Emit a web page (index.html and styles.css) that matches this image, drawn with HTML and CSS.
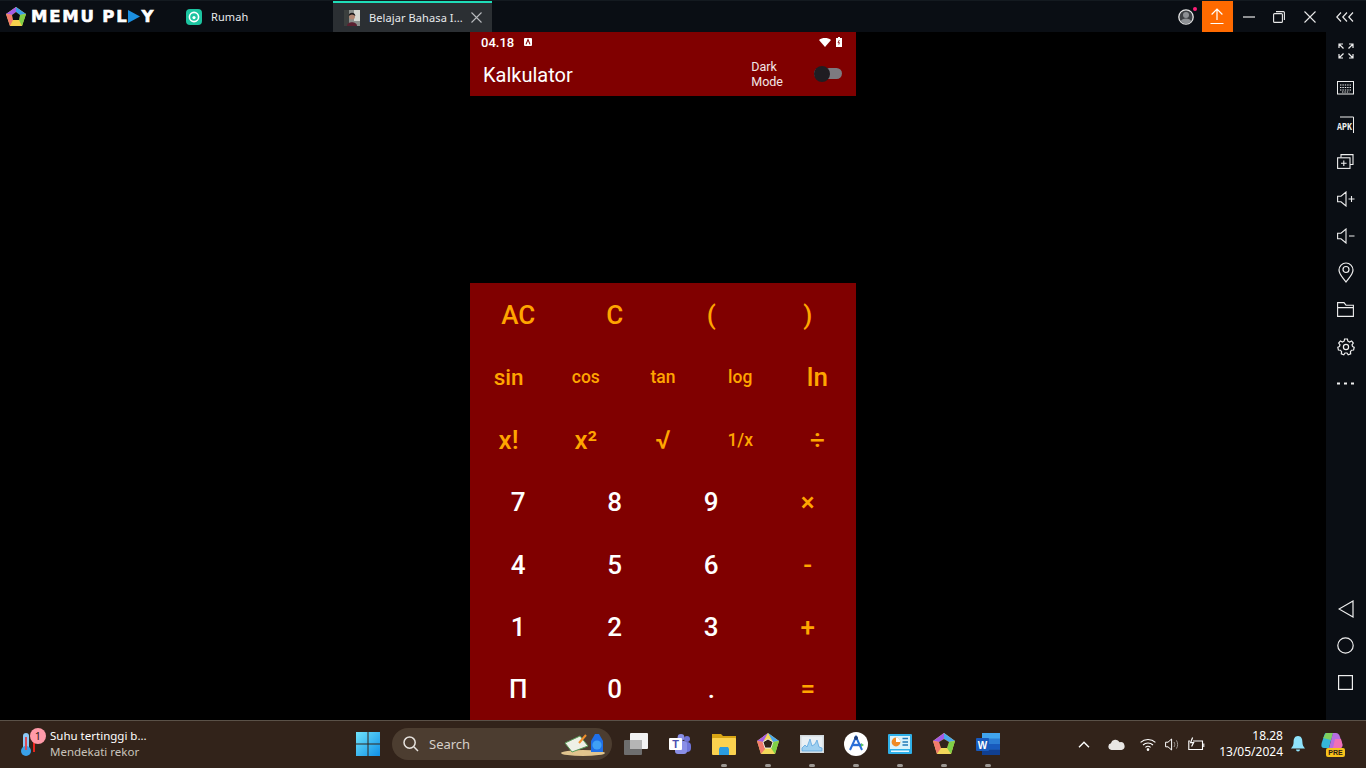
FILE: index.html
```html
<!DOCTYPE html>
<html lang="id">
<head>
  <meta charset="UTF-8">
  <meta name="viewport" content="width=device-width, initial-scale=1">
  <title>MEmu Play - Kalkulator</title>
  <link rel="stylesheet" href="styles.css">
</head>
<body>
  <header class="titlebar">
    <div class="logo">
      <svg class="logo-mark" width="22" height="22" viewBox="0 0 22 22">
        <path d="M11 1 L21 8 L17 20 L5 20 L1 8 Z" fill="#f6d04d"/>
        <path d="M11 1 L21 8 L15 9 L11 6 Z" fill="#3a9ee8"/>
        <path d="M11 1 L11 6 L7 9 L1 8 Z" fill="#a45be6"/>
        <path d="M1 8 L7 9 L8 14 L5 20 Z" fill="#f27a6c"/>
        <path d="M21 8 L17 20 L14 14 L15 9 Z" fill="#7fd046"/>
        <path d="M11 6 L15 9 L14 14 L8 14 L7 9 Z" fill="#0a0e14"/>
      </svg>
      <span class="logo-text">MEMU PL<svg class="logo-play" width="12" height="13" viewBox="0 0 12 13"><path d="M0 0 L12 6.5 L0 13 Z" fill="#1b8fe0"/></svg>Y</span>
    </div>
    <div class="tab">
      <svg width="16" height="16" viewBox="0 0 16 16">
        <rect width="16" height="16" rx="4" fill="#1cc4a0"/>
        <circle cx="8" cy="8" r="4.6" fill="none" stroke="#fff" stroke-width="1.6"/>
        <circle cx="8" cy="8.6" r="1.6" fill="#fff"/>
      </svg>
      <span>Rumah</span>
    </div>
    <div class="tab tab-active">
      <svg width="16" height="16" viewBox="0 0 16 16">
        <rect width="16" height="16" fill="#8a8f8c"/>
        <rect x="10" width="6" height="11" fill="#d6d8d2"/>
        <rect width="5" height="16" fill="#3b3f3e"/>
        <path d="M3 16 C3 11 13 11 13 16 Z" fill="#5a2030"/>
        <circle cx="8" cy="6.5" r="3" fill="#b08672"/>
        <path d="M4.6 6 C5 1.8 11 1.8 11.4 6 C9 4 7 4 4.6 6 Z" fill="#1c1a1c"/>
      </svg>
      <span class="tab-title">Belajar Bahasa I...</span>
      <svg class="tab-close" width="11" height="11" viewBox="0 0 11 11"><path d="M.5.5 L10.5 10.5 M10.5.5 L.5 10.5" stroke="#b9bcbf" stroke-width="1.1"/></svg>
    </div>
    <div class="window-controls">
      <span class="control control-profile">
        <svg width="18" height="18" viewBox="0 0 18 18">
          <circle cx="9" cy="9" r="7.2" fill="#3d4044" stroke="#e4e4e4" stroke-width="1.3"/>
          <circle cx="9" cy="7" r="3" fill="#8d9094"/>
          <path d="M3.6 13.6 C5 9.6 13 9.6 14.4 13.6 C12 16 6 16 3.6 13.6 Z" fill="#8d9094"/>
        </svg>
        <i class="profile-dot"></i>
      </span>
      <span class="control control-upload">
        <svg width="14" height="17" viewBox="0 0 14 17" fill="none" stroke="#fff" stroke-width="1.2"><path d="M7 12 V1.2 M1.6 6.5 L7 1 L12.4 6.5 M.5 15.5 H13.5"/></svg>
      </span>
      <span class="control control-win">
        <svg width="12" height="2" viewBox="0 0 12 2"><path d="M0 1 H12" stroke="#e8e8e8" stroke-width="1.2"/></svg>
      </span>
      <span class="control control-win">
        <svg width="12" height="12" viewBox="0 0 12 12" fill="none" stroke="#e8e8e8" stroke-width="1.1"><rect x=".6" y="2.6" width="8.8" height="8.8" rx="1"/><path d="M3 .6 H10.4 A1 1 0 0 1 11.4 1.6 V9"/></svg>
      </span>
      <span class="control control-win">
        <svg width="12" height="12" viewBox="0 0 12 12"><path d="M.5.5 L11.5 11.5 M11.5.5 L.5 11.5" stroke="#e8e8e8" stroke-width="1.1"/></svg>
      </span>
      <span class="control control-more">
        <svg width="18" height="10" viewBox="0 0 18 10" fill="none" stroke="#e8e8e8" stroke-width="1.2"><path d="M5 .5 L.8 5 L5 9.5 M11 .5 L6.8 5 L11 9.5 M17 .5 L12.8 5 L17 9.5"/></svg>
      </span>
    </div>
  </header>

  <div class="workspace">
    <main class="stage">
      <section class="phone">
        <div class="phone-header">
          <div class="statusbar">
            <span class="clock">04.18</span>
            <svg class="status-a" width="8" height="8" viewBox="0 0 8 8"><rect width="8" height="8" rx="1" fill="#fff"/><path d="M2 6.4 L4 1.6 L6 6.4" fill="none" stroke="#800000" stroke-width="1.1"/></svg>
            <span class="status-right">
              <svg width="12" height="9" viewBox="0 0 12 9"><path d="M0 2 C3.4 -.6 8.6 -.6 12 2 L6 9 Z" fill="#fff"/></svg>
              <svg width="6" height="10" viewBox="0 0 6 10"><path d="M2 0 H4 V1 H6 V10 H0 V1 H2 Z" fill="#fff"/><path d="M3.4 3 L2 5.6 H3.4 L2.8 7.6" fill="none" stroke="#800000" stroke-width=".8"/></svg>
            </span>
          </div>
          <div class="appbar">
            <h1>Kalkulator</h1>
            <span class="dark-label">Dark<br>Mode</span>
            <span class="switch"><i class="switch-thumb"></i></span>
          </div>
        </div>

        <div class="keypad">
          <div class="key-row">
            <button class="key size-lg">AC</button>
            <button class="key size-lg">C</button>
            <button class="key size-lg">(</button>
            <button class="key size-lg">)</button>
          </div>
          <div class="key-row">
            <button class="key size-sin">sin</button>
            <button class="key size-sm">cos</button>
            <button class="key size-sm">tan</button>
            <button class="key size-sm">log</button>
            <button class="key size-lg">ln</button>
          </div>
          <div class="key-row">
            <button class="key size-lg">x!</button>
            <button class="key size-lg">x²</button>
            <button class="key size-lg">√</button>
            <button class="key size-sm">1/x</button>
            <button class="key size-lg">÷</button>
          </div>
          <div class="key-row">
            <button class="key digit">7</button>
            <button class="key digit">8</button>
            <button class="key digit">9</button>
            <button class="key size-lg">×</button>
          </div>
          <div class="key-row">
            <button class="key digit">4</button>
            <button class="key digit">5</button>
            <button class="key digit">6</button>
            <button class="key size-lg">-</button>
          </div>
          <div class="key-row">
            <button class="key digit">1</button>
            <button class="key digit">2</button>
            <button class="key digit">3</button>
            <button class="key size-lg">+</button>
          </div>
          <div class="key-row">
            <button class="key digit">Π</button>
            <button class="key digit">0</button>
            <button class="key digit">.</button>
            <button class="key size-lg">=</button>
          </div>
        </div>
      </section>
    </main>

    <aside class="sidebar">
      <div class="side-group">
        <span class="side-item"><svg width="16" height="16" viewBox="0 0 16 16" fill="none" stroke="#eee" stroke-width="1.2"><path d="M1 5 V1 H5 M1 1 L5.5 5.5 M11 1 H15 V5 M15 1 L10.5 5.5 M1 11 V15 H5 M1 15 L5.5 10.5 M15 11 V15 H11 M15 15 L10.5 10.5"/></svg></span>
        <span class="side-item"><svg width="18" height="14" viewBox="0 0 18 14" fill="none" stroke="#eee"><rect x=".5" y=".5" width="16" height="12.5"/><path d="M3 4 H14.5 M3 6.5 H14.5 M3 9 H14.5 M5 11 H12.5" stroke-dasharray="1.4 1"/></svg></span>
        <span class="side-item"><svg width="22" height="18" viewBox="0 0 22 18"><path d="M5 1 H18.5 V17" fill="none" stroke="#eee"/><text class="apk-text" x="2" y="14" textLength="15" lengthAdjust="spacingAndGlyphs">APK</text></svg></span>
        <span class="side-item"><svg width="17" height="15" viewBox="0 0 17 15" fill="none" stroke="#eee" stroke-width="1.1"><path d="M4 3.5 V.6 H16 V10.5 H13"/><rect x=".6" y="3.8" width="12.4" height="10.6"/><path d="M6.8 6.4 V12 M4 9.2 H9.6"/></svg></span>
        <span class="side-item"><svg width="18" height="16" viewBox="0 0 18 16" fill="none" stroke="#eee" stroke-width="1.1"><path d="M.6 5.2 H4 L9 1 V15 L4 10.8 H.6 Z M11.5 8 H17.5 M14.5 5 V11"/></svg></span>
        <span class="side-item"><svg width="18" height="16" viewBox="0 0 18 16" fill="none" stroke="#eee" stroke-width="1.1"><path d="M.6 5.2 H4 L9 1 V15 L4 10.8 H.6 Z M12 8 H17.5"/></svg></span>
        <span class="side-item"><svg width="16" height="21" viewBox="0 0 16 21" fill="none" stroke="#eee" stroke-width="1.2"><path d="M8 20 C5 15.5 1 12.5 1 8 A7 7 0 0 1 15 8 C15 12.5 11 15.5 8 20 Z"/><circle cx="8" cy="7.5" r="3"/></svg></span>
        <span class="side-item"><svg width="17" height="15" viewBox="0 0 17 15" fill="none" stroke="#eee" stroke-width="1.1"><path d="M.6 14.4 V.6 H7 L9 3.2 H16.4 V14.4 Z M.6 5.6 H16.4"/></svg></span>
        <span class="side-item"><svg width="18" height="18" viewBox="0 0 18 18" fill="none" stroke="#eee" stroke-width="1.2"><circle cx="9" cy="9" r="2.6"/><path d="M7.6 1 H10.4 L10.9 3.2 L12.6 4 L14.6 2.9 L16.3 5 L15 6.8 L15.5 8.4 L17.2 9.4 L16.6 12 L14.6 12.2 L13.4 13.7 L13.7 15.9 L11.2 16.8 L10 15 H8 L6.8 16.8 L4.3 15.9 L4.6 13.7 L3.4 12.2 L1.4 12 L.8 9.4 L2.5 8.4 L3 6.8 L1.7 5 L3.4 2.9 L5.4 4 L7.1 3.2 Z"/></svg></span>
        <span class="side-item"><svg width="17" height="3" viewBox="0 0 17 3"><path d="M0 1.5 H3 M7 1.5 H10 M14 1.5 H17" stroke="#eee" stroke-width="2"/></svg></span>
      </div>
      <div class="side-group side-nav">
        <span class="side-item"><svg width="16" height="18" viewBox="0 0 16 18" fill="none" stroke="#eee" stroke-width="1.2"><path d="M15 1 V17 L1 9 Z"/></svg></span>
        <span class="side-item"><svg width="17" height="17" viewBox="0 0 17 17" fill="none" stroke="#eee" stroke-width="1.2"><circle cx="8.5" cy="8.5" r="7.7"/></svg></span>
        <span class="side-item"><svg width="15" height="15" viewBox="0 0 15 15" fill="none" stroke="#eee" stroke-width="1.2"><rect x=".6" y=".6" width="13.8" height="13.8"/></svg></span>
      </div>
    </aside>
  </div>

  <footer class="taskbar">
    <div class="widget">
      <span class="widget-icon">
        <svg width="18" height="28" viewBox="0 0 18 28">
          <rect x="3" y="3" width="6" height="17" rx="3" fill="#8cc8f5"/>
          <circle cx="6" cy="21" r="5" fill="#39a0e8"/>
          <rect x="5" y="7" width="2" height="13" fill="#d94a5a"/>
          <rect x="13" y="12" width="2" height="10" fill="#e8241c"/>
        </svg>
        <i class="widget-badge">1</i>
      </span>
      <div class="widget-text">
        <span class="widget-title">Suhu tertinggi b...</span>
        <span class="widget-sub">Mendekati rekor</span>
      </div>
    </div>

    <div class="task-center">
      <span class="task-icon">
        <svg width="24" height="24" viewBox="0 0 24 24">
          <defs><linearGradient id="win" x1="0" y1="0" x2="1" y2="1"><stop offset="0" stop-color="#6fe3fb"/><stop offset="1" stop-color="#0f8fe6"/></linearGradient></defs>
          <path d="M0 0 H11.5 V11.5 H0 Z M12.5 0 H24 V11.5 H12.5 Z M0 12.5 H11.5 V24 H0 Z M12.5 12.5 H24 V24 H12.5 Z" fill="url(#win)"/>
        </svg>
      </span>
      <div class="search">
        <svg width="16" height="16" viewBox="0 0 16 16" fill="none" stroke="#e6e2dd" stroke-width="1.5"><circle cx="6.6" cy="6.6" r="5.6"/><path d="M10.8 10.8 L15 15"/></svg>
        <span class="search-text">Search</span>
        <svg class="search-art" width="46" height="24" viewBox="0 0 46 24">
          <ellipse cx="23" cy="21" rx="22" ry="3" fill="#e0c48e"/>
          <path d="M5 11 L20 4 L28 14 L12 20 Z" fill="#eef0e6" stroke="#5a9c5a"/>
          <path d="M19 11 L26 3" stroke="#f0902c" stroke-width="2"/>
          <path d="M31 20 L31 9 L35 2 H39 L43 9 V20 Z" fill="#1f6fe8"/>
          <circle cx="37" cy="13" r="4.6" fill="#3fa0f4"/>
        </svg>
      </div>
      <span class="task-icon">
        <svg width="24" height="22" viewBox="0 0 24 22"><rect x="0" y="7" width="18" height="15" rx="1" fill="#6e6e6e"/><rect x="6" y="0" width="18" height="16" rx="1" fill="#f2f2f2"/><rect x="6" y="7" width="12" height="9" fill="#b5b5b5"/></svg>
      </span>
      <span class="task-icon">
        <svg width="24" height="20" viewBox="0 0 24 20"><circle cx="19" cy="5" r="3" fill="#6f74d8"/><rect x="13" y="8" width="10" height="10" rx="4" fill="#6f74d8"/><circle cx="13" cy="3.4" r="3.4" fill="#8a8fe6"/><rect x="7" y="7" width="12" height="13" rx="3" fill="#8a8fe6"/><rect x="1" y="4" width="13" height="12" rx="1" fill="#fff"/><text class="teams-t" x="7.5" y="13.5">T</text></svg>
      </span>
      <span class="task-icon running">
        <svg width="24" height="22" viewBox="0 0 24 22"><path d="M0 1 H9 L11 3 H24 V6 H0 Z" fill="#d9a514"/><rect y="5" width="24" height="17" rx="1" fill="#fbd24f"/><path d="M8 14 H16 L17 16 V22 H7 V16 Z" fill="#2a9ce0"/></svg>
      </span>
      <span class="task-icon running">
        <svg width="24" height="24" viewBox="0 0 24 24"><path d="M12 1 L23 9 L19 22 L5 22 L1 9 Z" fill="#f3d85a"/><path d="M12 1 L23 9 L17 10 Z" fill="#4aa8ec"/><path d="M12 1 L7 10 L1 9 Z" fill="#a45be6"/><path d="M1 9 L7 10 L9 17 L5 22 Z" fill="#f27a6c"/><path d="M23 9 L19 22 L15 16 L17 10 Z" fill="#7fd046"/><path d="M12 7 L17 10 L15 16 L9 16 L7 10 Z" fill="#32231a" stroke="#fff" stroke-width=".8"/></svg>
      </span>
      <span class="task-icon running">
        <svg width="24" height="18" viewBox="0 0 24 18"><rect width="24" height="18" fill="#d3dade"/><rect x="1.5" y="1.5" width="21" height="15" fill="#e9f0f5"/><path d="M2 13 L5 10 L7 12 L10 4 L12 11 L15 9 L17 5 L19 12 L22 13 V16 H2 Z" fill="#9ecff0" stroke="#4f9fdc" stroke-width=".7"/></svg>
      </span>
      <span class="task-icon running">
        <svg width="24" height="24" viewBox="0 0 24 24"><circle cx="12" cy="12" r="12" fill="#fff"/><path d="M6 18 L12 5 L18 18" fill="none" stroke="#2a6fd8" stroke-width="2"/><path d="M8 13 H17" stroke="#2a6fd8" stroke-width="2.4"/><circle cx="12" cy="6" r="2" fill="#1f3f7a"/><path d="M17 11 L20 13 L17 15 Z" fill="#57c06a"/></svg>
      </span>
      <span class="task-icon running">
        <svg width="24" height="20" viewBox="0 0 24 20"><rect width="24" height="20" rx="1" fill="#2fb0e8"/><rect x="2" y="2" width="20" height="13" fill="#d9f2fb"/><circle cx="8" cy="8" r="4.4" fill="#f08a24"/><path d="M8 8 V3.6 A4.4 4.4 0 0 1 12.4 8 Z" fill="#fff"/><path d="M14.5 4.5 H20 M14.5 8 H20 M14.5 11 H20" stroke="#2079b8" stroke-width="1.4"/><rect x="3" y="16.5" width="18" height="1.5" fill="#e6f7ff"/></svg>
      </span>
      <span class="task-icon running">
        <svg width="24" height="24" viewBox="0 0 24 24"><path d="M12 1 L23 9 L19 22 L5 22 L1 9 Z" fill="#f3d85a"/><path d="M12 1 L23 9 L17 10 L12 7 Z" fill="#4aa8ec"/><path d="M12 1 L12 7 L7 10 L1 9 Z" fill="#a45be6"/><path d="M1 9 L7 10 L9 16 L5 22 Z" fill="#f27a6c"/><path d="M23 9 L19 22 L15 16 L17 10 Z" fill="#7fd046"/><path d="M12 7 L17 10 L15 16 L9 16 L7 10 Z" fill="#32231a"/></svg>
      </span>
      <span class="task-icon running">
        <svg width="24" height="22" viewBox="0 0 24 22"><path d="M6 0 H24 V22 H6 Z" fill="#2b7cd3"/><rect x="6" width="18" height="5.5" fill="#41a5ee"/><rect x="6" y="11" width="18" height="5.5" fill="#185abd"/><rect x="6" y="16.5" width="18" height="5.5" fill="#103f91"/><rect y="5" width="13" height="13" rx="1" fill="#185abd"/><text class="word-w" x="6.5" y="15.5">W</text></svg>
      </span>
    </div>

    <div class="tray">
      <svg class="tray-chevron" width="12" height="7" viewBox="0 0 12 7" fill="none" stroke="#fff" stroke-width="1.4"><path d="M1 6.2 L6 1.2 L11 6.2"/></svg>
      <svg class="tray-cloud" width="17" height="11" viewBox="0 0 17 11"><path d="M3.5 11 A3.4 3.4 0 0 1 3 4.3 A4.6 4.6 0 0 1 11.6 3.2 A3.9 3.9 0 0 1 13.5 11 Z" fill="#e8e6e4"/></svg>
      <svg class="tray-wifi" width="16" height="13" viewBox="0 0 16 13" fill="none" stroke="#fff" stroke-width="1.1"><path d="M.6 4.4 C4.6 .6 11.4 .6 15.4 4.4 M3 7 C5.8 4.4 10.2 4.4 13 7 M5.4 9.4 C6.8 8.2 9.2 8.2 10.6 9.4"/><circle cx="8" cy="11.6" r=".8" fill="#fff"/></svg>
      <svg class="tray-sound" width="16" height="13" viewBox="0 0 16 13" fill="none" stroke="#fff"><path d="M.6 4.2 H3 L6.6 1 V12 L3 8.8 H.6 Z"/><path d="M9 4 C10 5.4 10 7.6 9 9 M11.4 2.4 C13 4.6 13 8.4 11.4 10.6" stroke="#9b9590"/></svg>
      <svg class="tray-battery" width="17" height="14" viewBox="0 0 17 14" fill="none" stroke="#fff" stroke-width="1.1"><path d="M5 4 H14.5 V12.5 H.8 V4 H2"/><path d="M15.8 6.5 V10"/><path d="M4.6 .5 L2.6 5.6 H5.6 L3.6 9.5" stroke-width="1.2"/></svg>
      <div class="tray-clock">
        <span>18.28</span>
        <span>13/05/2024</span>
      </div>
      <svg class="tray-bell" width="14" height="16" viewBox="0 0 14 16"><path d="M7 0 C10.4 0 11.4 3 11.4 6 C11.4 9 12.4 10.6 14 12.4 H0 C1.6 10.6 2.6 9 2.6 6 C2.6 3 3.6 0 7 0 Z M5 13.4 H9 A2 2 0 0 1 5 13.4 Z" fill="#8fe3fb"/></svg>
      <span class="copilot">
        <svg width="22" height="19" viewBox="0 0 22 19"><path d="M5 1 H12 L8 16 H3 C0 16 0 13 1 10 L3 4 C3.6 2 4 1 5 1 Z" fill="#35b7d8"/><path d="M5 1 H12 L10 8 L2.2 6 Z" fill="#7fcf5e"/><path d="M12 1 H15 C17 1 18 2 19 5 L21 11 C22 14 21 16 19 16 H8 Z" fill="#b66de0"/><path d="M14 7 H20 L21 11 C22 14 21 16 19 16 H12 Z" fill="#f070b8"/></svg>
        <i class="pre-badge">PRE</i>
      </span>
    </div>
  </footer>
</body>
</html>
```

FILE: styles.css
```css
* {
  margin: 0;
  padding: 0;
  box-sizing: border-box;
}

body {
  width: 1366px;
  height: 768px;
  overflow: hidden;
  display: flex;
  flex-direction: column;
  background: #000;
  font-family: "Noto Sans", "Open Sans", sans-serif;
  color: #fff;
}

svg {
  display: block;
  flex-shrink: 0;
}

/* title bar */
.titlebar {
  height: 32px;
  flex-shrink: 0;
  display: flex;
  align-items: center;
  background: #0a0e14;
  border-top: 1px solid #141a20;
}

.logo {
  width: 186px;
  padding-left: 5px;
  display: flex;
  align-items: center;
  gap: 4px;
}

.logo-text {
  display: flex;
  align-items: center;
  font-family: "DejaVu Sans", "Liberation Sans", sans-serif;
  font-weight: 700;
  font-size: 16.5px;
  letter-spacing: 1.8px;
  word-spacing: -1px;
  white-space: pre;
  -webkit-text-stroke: 0.6px #fff;
}

.logo-play {
  margin: 0 1px 0 0;
}

.tab {
  display: flex;
  align-items: center;
  gap: 9px;
  width: 147px;
  height: 31px;
  font-size: 11px;
  letter-spacing: 0.1px;
  color: #e8eaec;
}

.tab-active {
  width: 159px;
  padding-left: 11px;
  gap: 9px;
  background: #2b2f33;
  border-top: 2px solid #1fdcb8;
}

.tab-title {
  width: 95px;
  white-space: nowrap;
}

.tab-close {
  margin-left: -2px;
}

.window-controls {
  margin-left: auto;
  display: flex;
  align-items: center;
  height: 31px;
}

.control {
  position: relative;
  display: flex;
  align-items: center;
  justify-content: center;
  height: 31px;
}

.control-profile {
  width: 30px;
  margin-right: 1px;
}

.profile-dot {
  position: absolute;
  top: 6px;
  right: 4px;
  width: 4px;
  height: 4px;
  border-radius: 50%;
  background: #ff1e78;
}

.control-upload {
  width: 31px;
  margin-right: 1px;
  background: #ff6a00;
}

.control-win {
  width: 30.5px;
}

.control-more {
  width: 41px;
  padding-right: 1px;
}

/* emulator area */
.workspace {
  flex: 1;
  min-height: 0;
  display: flex;
}

.stage {
  flex: 1;
  padding-left: 470px;
  background: #000;
}

.phone {
  width: 386px;
  height: 100%;
  display: flex;
  flex-direction: column;
  justify-content: space-between;
}

.phone-header {
  height: 64px;
  padding: 0 14px 0 11px;
  background: #800000;
}

.statusbar {
  height: 20px;
  display: flex;
  align-items: center;
  gap: 10px;
  font-family: "Roboto", sans-serif;
  font-size: 13px;
  font-weight: 500;
}

.status-right {
  margin-left: auto;
  display: flex;
  align-items: center;
  gap: 5px;
}

.appbar {
  display: flex;
  align-items: center;
  height: 44px;
  padding: 1px 0 0 2px;
  font-family: "Roboto", sans-serif;
}

.appbar h1 {
  font-size: 20px;
  font-weight: 400;
  width: 269px;
}

.dark-label {
  width: 63px;
  margin-bottom: 2px;
  font-size: 12.5px;
  line-height: 15px;
  color: #f2e6e6;
}

.switch {
  position: relative;
  width: 28px;
  height: 11px;
  margin-bottom: 2px;
  border-radius: 6px;
  background: #7d7a80;
}

.switch-thumb {
  position: absolute;
  left: 0;
  top: -2.5px;
  width: 16px;
  height: 16px;
  border-radius: 50%;
  background: #1f1d22;
}

.keypad {
  height: 437px;
  display: grid;
  grid-template-rows: repeat(7, 1fr);
  background: #800000;
}

.key-row {
  display: flex;
}

.key {
  flex: 1;
  padding-top: 1.4px;
  border: none;
  background: none;
  font-family: "Roboto", sans-serif;
  font-weight: 500;
  color: #ffa500;
}

.size-lg {
  font-size: 26px;
}

.size-sin {
  font-size: 22.5px;
}

.size-sm {
  font-size: 17.5px;
}

.digit {
  font-size: 26px;
  color: #fff;
}

/* right tool strip */
.sidebar {
  width: 40px;
  display: flex;
  flex-direction: column;
  justify-content: space-between;
  padding: 0 1px 19px 0;
  background: #0a0e14;
}

.side-item {
  height: 37px;
  display: flex;
  align-items: center;
  justify-content: center;
}

.apk-text {
  font-family: "Liberation Mono", monospace;
  font-size: 11px;
  font-weight: 700;
  fill: #eee;
}

/* windows taskbar */
.taskbar {
  height: 48px;
  flex-shrink: 0;
  display: flex;
  align-items: center;
  padding-bottom: 1px;
  background: #32231a;
  border-top: 1px solid #5a5148;
  font-size: 11.5px;
}

.widget {
  width: 346px;
  padding-left: 20px;
  display: flex;
  align-items: center;
  gap: 12px;
}

.widget-icon {
  position: relative;
  width: 18px;
  height: 28px;
}

.widget-badge {
  position: absolute;
  left: 10px;
  top: -2px;
  width: 16px;
  height: 16px;
  border-radius: 50%;
  background: #ff9aa8;
  color: #2a1a14;
  font-size: 11px;
  font-style: normal;
  line-height: 16px;
  text-align: center;
}

.widget-text {
  display: flex;
  flex-direction: column;
  line-height: 16px;
}

.widget-sub {
  color: #c9c3bc;
}

.task-center {
  display: flex;
  align-items: center;
}

.task-icon {
  position: relative;
  width: 44px;
  height: 44px;
  display: flex;
  align-items: center;
  justify-content: center;
}

.running::after {
  content: "";
  position: absolute;
  left: 19px;
  bottom: -1px;
  width: 6px;
  height: 3px;
  border-radius: 2px;
  background: #9d9893;
}

.search {
  width: 220px;
  height: 32px;
  margin: 0 2px;
  padding: 0 6px 0 11px;
  display: flex;
  align-items: center;
  gap: 10px;
  border-radius: 16px;
  background: #4c3d30;
}

.search-text {
  font-size: 13px;
  color: #d6d0c9;
}

.search-art {
  margin-left: auto;
}

.teams-t {
  font-family: "Liberation Sans", sans-serif;
  font-size: 11px;
  font-weight: 700;
  fill: #4b4fb0;
  text-anchor: middle;
}

.word-w {
  font-family: "Liberation Sans", sans-serif;
  font-size: 10px;
  font-weight: 700;
  fill: #fff;
  text-anchor: middle;
}

.tray {
  flex: 1;
  display: flex;
  align-items: center;
  padding-left: 68px;
}

.tray-cloud {
  margin-left: 18px;
}

.tray-wifi {
  margin-left: 15px;
}

.tray-sound {
  margin-left: 9px;
}

.tray-battery {
  margin-left: 7px;
}

.tray-clock {
  width: 78px;
  display: flex;
  flex-direction: column;
  align-items: flex-end;
  line-height: 16px;
  font-size: 12px;
}

.tray-bell {
  margin-left: 8px;
}

.copilot {
  position: relative;
  margin-left: 16px;
  width: 24px;
  height: 24px;
}

.pre-badge {
  position: absolute;
  left: 5px;
  bottom: -1px;
  width: 19px;
  height: 9px;
  border-radius: 2px;
  background: #f7c31c;
  color: #2a1a14;
  font-family: "Liberation Sans", sans-serif;
  font-size: 7px;
  font-style: normal;
  font-weight: 700;
  line-height: 9px;
  text-align: center;
}
```
